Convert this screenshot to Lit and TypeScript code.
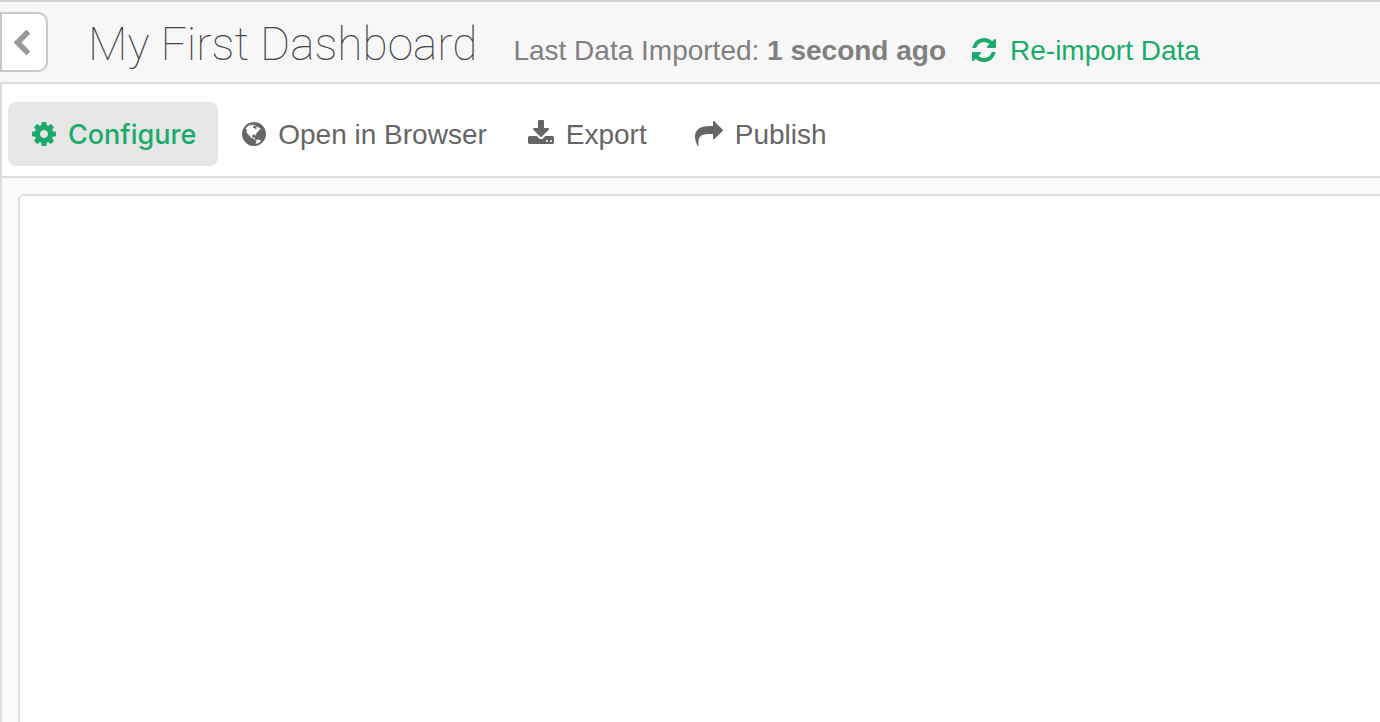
import { LitElement, html, css, svg } from "lit";
import { customElement, property, state } from "lit/decorators.js";
import { classMap } from "lit/directives/class-map.js";

type Icon = { box: string; width: number; height: number; path: string };

const ICONS: Record<string, Icon> = {
  back: {
    box: "410 26 1036 1612",
    width: 16,
    height: 25,
    path: "M1427 301l-531 531 531 531q19 19 19 45t-19 45l-166 166q-19 19-45 19t-45-19l-742-742q-19-19-19-45t19-45l742-742q19-19 45-19t45 19l166 166q19 19 19 45t-19 45z",
  },
  refresh: {
    box: "128 128 1536 1536",
    width: 24,
    height: 24,
    path: "M1639 1056q0 5-1 7-64 268-268 434.500t-478 166.500q-146 0-282.500-55t-243.500-157l-129 129q-19 19-45 19t-45-19-19-45v-448q0-26 19-45t45-19h448q26 0 45 19t19 45-19 45l-137 137q71 66 161 102t187 36q134 0 250-65t186-179q11-17 53-117 8-23 30-23h192q13 0 22.500 9.500t9.500 22.500zm25-800v448q0 26-19 45t-45 19h-448q-26 0-45-19t-19-45 19-45l138-138q-148-137-349-137-134 0-250 65t-186 179q-11 17-53 117-8 23-30 23h-199q-13 0-22.500-9.500t-9.500-22.500v-7q65-268 270-434.500t480-166.500q146 0 284 55.500t245 156.500l130-129q19-19 45-19t45 19 19 45z",
  },
  cog: {
    box: "128 128 1536 1536",
    width: 24,
    height: 24,
    path: "M1152 896q0-106-75-181t-181-75-181 75-75 181 75 181 181 75 181-75 75-181zm512-109v222q0 12-8 23t-20 13l-185 28q-19 54-39 91 35 50 107 138 10 12 10 25t-9 23q-27 37-99 108t-94 71q-12 0-26-9l-138-108q-44 23-91 38-16 136-29 186-7 28-36 28h-222q-14 0-24.500-8.500t-11.500-21.500l-28-184q-49-16-90-37l-141 107q-10 9-25 9-14 0-25-11-126-114-165-168-7-10-7-23 0-12 8-23 15-21 51-66.500t54-70.500q-27-50-41-99l-183-27q-13-2-21-12.500t-8-23.500v-222q0-12 8-23t19-13l186-28q14-46 39-92-40-57-107-138-10-12-10-24 0-10 9-23 26-36 98.500-107.500t94.500-71.500q13 0 26 10l138 107q44-23 91-38 16-136 29-186 7-28 36-28h222q14 0 24.500 8.500t11.500 21.500l28 184q49 16 90 37l142-107q9-9 24-9 13 0 25 10 129 119 165 170 7 8 7 22 0 12-8 23-15 21-51 66.500t-54 70.500q26 50 41 98l183 28q13 2 21 12.500t8 23.500z",
  },
  globe: {
    box: "128 128 1536 1536",
    width: 24,
    height: 24,
    path: "M896 128q209 0 385.500 103t279.500 279.500 103 385.500-103 385.500-279.500 279.500-385.500 103-385.500-103-279.500-279.500-103-385.500 103-385.500 279.500-279.500 385.500-103zm274 521q-2 1-9.500 9.500t-13.500 9.500q2 0 4.500-5t5-11 3.500-7q6-7 22-15 14-6 52-12 34-8 51 11-2-2 9.500-13t14.500-12q3-2 15-4.500t15-7.500l2-22q-12 1-17.500-7t-6.500-21q0 2-6 8 0-7-4.500-8t-11.500 1-9 1q-10-3-15-7.500t-8-16.500-4-15q-2-5-9.500-11t-9.500-10q-1-2-2.500-5.500t-3-6.500-4-5.500-5.500-2.500-7 5-7.500 10-4.500 5q-3-2-6-1.500t-4.500 1-4.500 3-5 3.500q-3 2-8.500 3t-8.500 2q15-5-1-11-10-4-16-3 9-4 7.500-12t-8.500-14h5q-1-4-8.500-8.500t-17.500-8.500-13-6q-8-5-34-9.500t-33-.5q-5 6-4.500 10.500t4 14 3.500 12.500q1 6-5.500 13t-6.500 12q0 7 14 15.500t10 21.500q-3 8-16 16t-16 12q-5 8-1.500 18.500t10.500 16.500q2 2 1.500 4t-3.500 4.500-5.500 4-6.500 3.500l-3 2q-11 5-20.500-6t-13.500-26q-7-25-16-30-23-8-29 1-5-13-41-26-25-9-58-4 6-1 0-15-7-15-19-12 3-6 4-17.500t1-13.500q3-13 12-23 1-1 7-8.500t9.500-13.500.5-6q35 4 50-11 5-5 11.500-17t10.500-17q9-6 14-5.500t14.500 5.500 14.500 5q14 1 15.500-11t-7.500-20q12 1 3-17-4-7-8-9-12-4-27 5-8 4 2 8-1-1-9.500 10.500t-16.500 17.500-16-5q-1-1-5.500-13.500t-9.500-13.500q-8 0-16 15 3-8-11-15t-24-8q19-12-8-27-7-4-20.500-5t-19.500 4q-5 7-5.500 11.500t5 8 10.500 5.500 11.500 4 8.500 3q14 10 8 14-2 1-8.500 3.500t-11.500 4.500-6 4q-3 4 0 14t-2 14q-5-5-9-17.500t-7-16.500q7 9-25 6l-10-1q-4 0-16 2t-20.500 1-13.500-8q-4-8 0-20 1-4 4-2-4-3-11-9.500t-10-8.500q-46 15-94 41 6 1 12-1 5-2 13-6.500t10-5.500q34-14 42-7l5-5q14 16 20 25-7-4-30-1-20 6-22 12 7 12 5 18-4-3-11.500-10t-14.500-11-15-5q-16 0-22 1-146 80-235 222 7 7 12 8 4 1 5 9t2.500 11 11.500-3q9 8 3 19 1-1 44 27 19 17 21 21 3 11-10 18-1-2-9-9t-9-4q-3 5 .5 18.500t10.500 12.500q-7 0-9.500 16t-2.500 35.500-1 23.500l2 1q-3 12 5.500 34.500t21.500 19.500q-13 3 20 43 6 8 8 9 3 2 12 7.500t15 10 10 10.500q4 5 10 22.500t14 23.500q-2 6 9.500 20t10.500 23q-1 0-2.500 1t-2.500 1q3 7 15.500 14t15.500 13q1 3 2 10t3 11 8 2q2-20-24-62-15-25-17-29-3-5-5.500-15.500t-4.500-14.500q2 0 6 1.500t8.500 3.500 7.500 4 2 3q-3 7 2 17.500t12 18.500 17 19 12 13q6 6 14 19.500t0 13.500q9 0 20 10.500t17 19.500q5 8 8 26t5 24q2 7 8.500 13.500t12.500 9.500l16 8 13 7q5 2 18.500 10.500t21.500 11.500q10 4 16 4t14.500-2.500 13.500-3.500q15-2 29 15t21 21q36 19 55 11-2 1 .5 7.500t8 15.500 9 14.500 5.500 8.500q5 6 18 15t18 15q6-4 7-9-3 8 7 20t18 10q14-3 14-32-31 15-49-18 0-1-2.500-5.500t-4-8.500-2.500-8.500 0-7.500 5-3q9 0 10-3.500t-2-12.500-4-13q-1-8-11-20t-12-15q-5 9-16 8t-16-9q0 1-1.500 5.500t-1.500 6.500q-13 0-15-1 1-3 2.500-17.500t3.500-22.500q1-4 5.500-12t7.500-14.500 4-12.500-4.500-9.500-17.500-2.500q-19 1-26 20-1 3-3 10.500t-5 11.500-9 7q-7 3-24 2t-24-5q-13-8-22.500-29t-9.500-37q0-10 2.500-26.500t3-25-5.500-24.500q3-2 9-9.500t10-10.500q2-1 4.500-1.500t4.500 0 4-1.500 3-6q-1-1-4-3-3-3-4-3 7 3 28.500-1.500t27.500 1.500q15 11 22-2 0-1-2.500-9.500t-.5-13.500q5 27 29 9 3 3 15.500 5t17.500 5q3 2 7 5.500t5.500 4.500 5-.5 8.500-6.500q10 14 12 24 11 40 19 44 7 3 11 2t4.500-9.500 0-14-1.500-12.500l-1-8v-18l-1-8q-15-3-18.500-12t1.500-18.500 15-18.500q1-1 8-3.500t15.500-6.500 12.500-8q21-19 15-35 7 0 11-9-1 0-5-3t-7.500-5-4.500-2q9-5 2-16 5-3 7.500-11t7.500-10q9 12 21 2 8-8 1-16 5-7 20.500-10.500t18.500-9.500q7 2 8-2t1-12 3-12q4-5 15-9t13-5l17-11q3-4 0-4 18 2 31-11 10-11-6-20 3-6-3-9.500t-15-5.500q3-1 11.500-.5t10.500-1.500q15-10-7-16-17-5-43 12zm-163 877q206-36 351-189-3-3-12.500-4.500t-12.500-3.500q-18-7-24-8 1-7-2.500-13t-8-9-12.500-8-11-7q-2-2-7-6t-7-5.500-7.500-4.500-8.500-2-10 1l-3 1q-3 1-5.500 2.500t-5.500 3-4 3 0 2.500q-21-17-36-22-5-1-11-5.500t-10.500-7-10-1.500-11.500 7q-5 5-6 15t-2 13q-7-5 0-17.500t2-18.500q-3-6-10.500-4.500t-12 4.500-11.500 8.500-9 6.500-8.500 5.500-8.500 7.500q-3 4-6 12t-5 11q-2-4-11.500-6.500t-9.500-5.500q2 10 4 35t5 38q7 31-12 48-27 25-29 40-4 22 12 26 0 7-8 20.500t-7 21.500q0 6 2 16z",
  },
  download: {
    box: "64 0 1664 1792",
    width: 26,
    height: 28,
    path: "M1344 1344q0-26-19-45t-45-19-45 19-19 45 19 45 45 19 45-19 19-45zm256 0q0-26-19-45t-45-19-45 19-19 45 19 45 45 19 45-19 19-45zm128-224v320q0 40-28 68t-68 28h-1472q-40 0-68-28t-28-68v-320q0-40 28-68t68-28h465l135 136q58 56 136 56t136-56l136-136h464q40 0 68 28t28 68zm-325-569q17 41-14 70l-448 448q-18 19-45 19t-45-19l-448-448q-31-29-14-70 17-39 59-39h256v-448q0-26 19-45t45-19h256q26 0 45 19t19 45v448h256q42 0 59 39z",
  },
  share: {
    box: "0 64 1792 1664",
    width: 28,
    height: 26,
    path: "M1792 640q0 26-19 45l-512 512q-19 19-45 19t-45-19-19-45v-256h-224q-98 0-175.500 6t-154 21.500-133 42.500-105.500 69.500-80 101-48.500 138.500-17.500 181q0 55 5 123 0 6 2.500 23.500t2.500 26.500q0 15-8.500 25t-23.500 10q-16 0-28-17-7-9-13-22t-13.500-30-10.500-24q-127-285-127-451 0-199 53-333 162-403 875-403h224v-256q0-26 19-45t45-19 45 19 19 45l512 512q19 19 19 45z",
  },
};

@customElement("ui-icon")
class UiIcon extends LitElement {
  @property() name = "cog";

  static styles = css`
    :host {
      display: inline-flex;
      flex: none;
    }
    .glyph {
      display: block;
      fill: currentColor;
    }
  `;

  render() {
    const icon = ICONS[this.name];
    return html`<svg
      class="glyph"
      viewBox=${icon.box}
      width=${icon.width}
      height=${icon.height}
      aria-hidden="true"
    >
      ${svg`<path d=${icon.path}></path>`}
    </svg>`;
  }
}

const ACTIONS = [
  { id: "configure", label: "Configure", icon: "cog" },
  { id: "open", label: "Open in Browser", icon: "globe" },
  { id: "export", label: "Export", icon: "download" },
  { id: "publish", label: "Publish", icon: "share" },
];

@customElement("app-root")
class AppRoot extends LitElement {
  @state() private active = "configure";

  static styles = css`
    :host {
      display: flex;
      flex-direction: column;
      min-height: 100vh;
      box-sizing: border-box;
      border-top: 2px solid #d5d5d5;
      background: #fafafa;
      font-family: "Liberation Sans", Arial, sans-serif;
      font-size: 28px;
      line-height: 32px;
      color: #666;
    }
    button {
      font: inherit;
      color: inherit;
      cursor: pointer;
    }
    .header {
      display: flex;
      align-items: center;
      height: 80px;
      background: #f7f7f7;
      border-bottom: 2px solid #ddd;
      white-space: nowrap;
    }
    .back {
      display: flex;
      align-items: center;
      box-sizing: border-box;
      width: 48px;
      height: 60px;
      padding: 0 0 0 12px;
      border: 2px solid #c8c8c8;
      border-radius: 0 10px 10px 0;
      background: #fff;
      color: #999;
    }
    .heading {
      display: flex;
      align-items: center;
      padding-left: 40px;
    }
    .title {
      margin: 0 36px 0 0;
      padding-top: 4px;
      font-family: Roboto, sans-serif;
      font-size: 46px;
      line-height: 56px;
      font-weight: 100;
      color: #444;
    }
    .status {
      display: flex;
      align-items: center;
      padding-top: 16px;
    }
    .imported {
      margin: 0 26px 0 0;
      color: #808080;
    }
    .reimport {
      display: flex;
      align-items: center;
      gap: 14px;
      color: #1aab6b;
      text-decoration: none;
    }
    .body {
      display: flex;
      flex-direction: column;
      flex: 1;
      border-left: 2px solid #ddd;
    }
    .toolbar {
      display: flex;
      padding: 18px 6px 10px;
      border-bottom: 2px solid #ddd;
      background: #fff;
      white-space: nowrap;
    }
    .action {
      display: flex;
      align-items: center;
      gap: 12px;
      height: 64px;
      padding: 0 24px;
      border: 0;
      border-radius: 8px;
      background: none;
    }
    .label {
      padding-top: 2px;
    }
    .action.compact {
      padding-right: 17px;
    }
    .action.active {
      padding-right: 22px;
      background: #e6e6e6;
      color: #1aab6b;
      font-family: Inter, sans-serif;
      font-size: 27px;
      font-weight: 500;
    }
    .canvas {
      flex: 1;
      margin: 16px 0 0 16px;
      border: 2px solid #e0e0e0;
      border-width: 2px 0 0 2px;
      border-radius: 6px 0 0 0;
      background: #fff;
    }
  `;

  render() {
    return html`
      <header class="header">
        <button class="back" type="button" aria-label="Back">
          <ui-icon name="back"></ui-icon>
        </button>
        <div class="heading">
          <h1 class="title">My First Dashboard</h1>
          <div class="status">
            <p class="imported label">Last Data Imported: <strong>1 second ago</strong></p>
            <a class="reimport" href="#reimport">
              <ui-icon name="refresh"></ui-icon>
              <span class="label">Re-import Data</span>
            </a>
          </div>
        </div>
      </header>
      <div class="body">
        <nav class="toolbar">
          ${ACTIONS.map(
            (action) => html`<button
              type="button"
              class=${classMap({
                action: true,
                active: action.id === this.active,
                compact: action.id === "open",
              })}
              @click=${() => (this.active = action.id)}
            >
              <ui-icon name=${action.icon}></ui-icon>
              <span class="label">${action.label}</span>
            </button>`
          )}
        </nav>
        <main class="canvas"></main>
      </div>
    `;
  }
}
